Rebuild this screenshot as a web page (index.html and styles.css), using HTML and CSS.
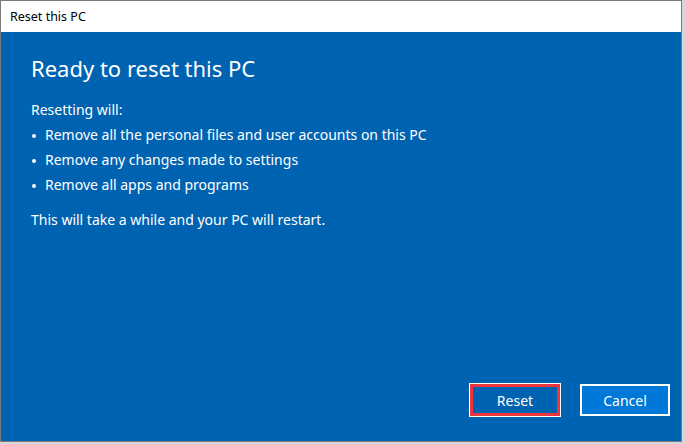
FILE: index.html
```html
<!DOCTYPE html>
<html>
<head>
<meta charset="utf-8">
<link rel="stylesheet" href="styles.css">
</head>
<body>
<div class="window">
  <div class="titlebar">Reset this PC</div>
  <div class="content">
    <div class="main">
      <h1 class="heading">Ready to reset this PC</h1>
      <p class="line">Resetting will:</p>
      <ul class="list">
        <li>Remove all the personal files and user accounts on this PC</li>
        <li>Remove any changes made to settings</li>
        <li>Remove all apps and programs</li>
      </ul>
      <p class="line note">This will take a while and your PC will restart.</p>
    </div>
    <div class="buttons">
      <button class="btn btn-reset">Reset</button>
      <button class="btn btn-cancel">Cancel</button>
    </div>
  </div>
</div>
</body>
</html>
```
FILE: styles.css
```css
html, body {
  margin: 0;
  padding: 0;
  width: 685px;
  height: 444px;
  overflow: hidden;
  background: #d6d6d6;
}
body {
  font-family: "Noto Sans", "Open Sans", sans-serif;
}
.window {
  width: 680px;
  height: 440px;
  border: 1px solid #7a7a7a;
  display: flex;
  flex-direction: column;
  background: #ffffff;
}
.titlebar {
  height: 31px;
  flex: 0 0 31px;
  box-sizing: border-box;
  padding-left: 9px;
  display: flex;
  align-items: center;
  font-size: 12.5px;
  color: #000;
  background: #fff;
}
.content {
  flex: 1;
  background: #0063b1;
  color: #fff;
  display: flex;
  flex-direction: column;
  justify-content: space-between;
  padding: 0 11px 25px 30px;
}
.heading {
  margin: 18px 0 0 0;
  font-weight: 400;
  font-size: 22px;
  line-height: 36px;
}
.line {
  margin: 11px 0 0 0;
  font-size: 14px;
  line-height: 25px;
}
.list {
  list-style: none;
  margin: 0;
  padding: 0;
  font-size: 14px;
  line-height: 25px;
}
.list li {
  position: relative;
  padding-left: 14px;
}
.list li::before {
  content: "";
  position: absolute;
  left: 1px;
  top: 12px;
  width: 4px;
  height: 4px;
  border-radius: 50%;
  background: #fff;
}
.note {
  margin-top: 10px;
}
.buttons {
  display: flex;
  justify-content: flex-end;
  gap: 20px;
}
.btn {
  width: 90px;
  height: 32px;
  box-sizing: border-box;
  font-family: "Noto Sans", "Open Sans", sans-serif;
  font-size: 14px;
  color: #fff;
  padding: 0;
}
.btn-reset {
  background: #0063b1;
  border: 3px solid #f0343c;
  outline: 1px solid #ffffff;
}
.btn-cancel {
  background: #0078d7;
  border: 2px solid #ffffff;
}
```
